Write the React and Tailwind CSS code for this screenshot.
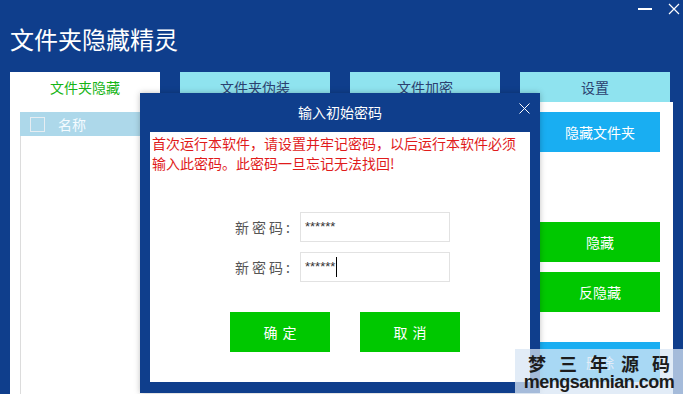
export default function App() {
    const tabs = ["文件夹隐藏", "文件夹伪装", "文件加密", "设置"]

    return (
        <div className="relative w-[683px] h-[394px] overflow-hidden bg-[#0f3e8c] font-['Noto_Sans_CJK_SC','Noto_Sans',sans-serif]">

            {/* title bar */}
            <div className="flex justify-between h-[72px]">
                <div className="pl-[10px] pt-[23px] text-[24px] leading-[32px] text-white">
                    文件夹隐藏精灵
                </div>
                <div className="flex items-start gap-[16px] pt-[2px] pr-[3px]">
                    <div className="mt-[6px] w-[14px] h-[2px] bg-white" />
                    <svg width="12" height="12" viewBox="0 0 12 12" className="mt-[1px]">
                        <path d="M1 1 L11 11 M11 1 L1 11" stroke="white" strokeWidth="1.2" />
                    </svg>
                </div>
            </div>

            {/* tabs */}
            <div className="flex gap-[20px] px-[10px]">
                {tabs.map((tab, i) => (
                    <div
                        key={i}
                        className={
                            i === 0
                                ? "w-[150px] h-[30px] bg-white flex items-center justify-center text-[14px] text-[#16b416]"
                                : "w-[150px] h-[30px] bg-[#8fe3ef] flex items-center justify-center text-[14px] text-[#2c4170]"
                        }
                    >
                        {tab}
                    </div>
                ))}
            </div>

            {/* content */}
            <div className="mx-[10px] h-[292px] bg-white flex">
                <div className="ml-[10px] mt-[10px] w-[480px] flex flex-col">
                    <div className="h-[24px] bg-[#add8ea] flex items-center">
                        <div className="ml-[10px] w-[15px] h-[15px] border border-[#e6edf2]" />
                        <div className="ml-[13px] text-[14px] text-[#f4fbff]">名称</div>
                    </div>
                    <div className="flex-1 border-l border-[#dcdcdc]" />
                </div>
                <div className="ml-[40px] mt-[10px] w-[120px] flex flex-col text-[14px] text-white">
                    <div className="h-[40px] bg-[#19aef2] flex items-center justify-center">隐藏文件夹</div>
                    <div className="mt-[70px] h-[40px] bg-[#00c800] flex items-center justify-center">隐藏</div>
                    <div className="mt-[10px] h-[40px] bg-[#00c800] flex items-center justify-center">反隐藏</div>
                    <div className="mt-[30px] h-[40px] bg-[#19aef2] flex items-center justify-center">删除</div>
                </div>
            </div>

            {/* dialog */}
            <div className="absolute left-[140px] top-[93px] w-[400px] h-[300px] bg-[#0f3e8c] flex flex-col shadow-[0_0_6px_rgba(0,0,0,0.25)]">
                <div className="relative h-[39px] flex items-center justify-center text-[14px] text-white">
                    输入初始密码
                    <svg width="11" height="11" viewBox="0 0 11 11" className="absolute right-[10px] top-[10px]">
                        <path d="M0.5 0.5 L10.5 10.5 M10.5 0.5 L0.5 10.5" stroke="white" strokeWidth="1" />
                    </svg>
                </div>
                <div className="mx-[10px] h-[250px] bg-white flex flex-col">
                    <p className="pl-[2px] pt-[1px] text-[14px] leading-[20px] text-[#e01b1b]">
                        首次运行本软件，请设置并牢记密码，以后运行本软件必须<br />
                        输入此密码。此密码一旦忘记无法找回!
                    </p>

                    <div className="mt-[39px] ml-[85px] flex flex-col gap-[10px]">
                        <div className="flex items-center">
                            <span className="w-[58px] text-[14px] tracking-[3px] text-[#555]">新密码:</span>
                            <div className="ml-[7px] w-[150px] h-[30px] border border-[#e2e2e2] flex items-center pl-[4px] text-[13px] text-[#333] font-['Liberation_Sans',sans-serif]">
                                ******
                            </div>
                        </div>
                        <div className="flex items-center">
                            <span className="w-[58px] text-[14px] tracking-[3px] text-[#555]">新密码:</span>
                            <div className="ml-[7px] w-[150px] h-[30px] border border-[#e2e2e2] flex items-center pl-[4px] text-[13px] text-[#333] font-['Liberation_Sans',sans-serif]">
                                ******
                                <span className="ml-[1px] w-[1px] h-[20px] bg-black" />
                            </div>
                        </div>
                    </div>

                    <div className="mt-[30px] ml-[80px] flex gap-[30px] text-[14px] text-white tracking-[5px]">
                        <div className="w-[100px] h-[40px] bg-[#00c800] flex items-center justify-center pl-[5px]">确定</div>
                        <div className="w-[100px] h-[40px] bg-[#00c800] flex items-center justify-center pl-[5px]">取消</div>
                    </div>
                </div>
            </div>

            {/* watermark */}
            <div className="absolute right-0 bottom-0 w-[168px] h-[45px] bg-[#d8e6f4]/75 flex flex-col items-center">
                <div className="mt-[4px] whitespace-nowrap text-[18px] leading-[20px] font-bold text-[#1c1c1c] tracking-[13px] pl-[13px]">梦三年源码</div>
                <div className="whitespace-nowrap text-[18px] leading-[19px] font-bold text-[#1c1c1c] tracking-[-0.5px] font-['Liberation_Sans',sans-serif]">mengsannian.com</div>
            </div>
        </div>
    )
}
